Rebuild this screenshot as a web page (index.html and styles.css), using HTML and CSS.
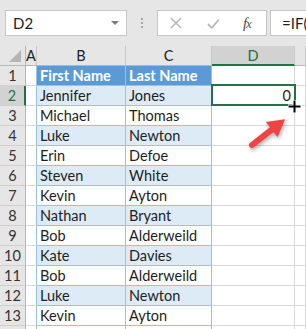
FILE: index.html
```html
<!DOCTYPE html>
<html lang="en">
<head>
    <meta charset="UTF-8">
    <title>Sheet - D2</title>
    <link rel="stylesheet" href="styles.css">
</head>
<body>
    <div class="formula-bar">
        <div class="name-box">
            <span>D2</span>
            <span class="drop"></span>
        </div>
        <div class="grip"><i></i><i></i><i></i></div>
        <div class="fx-buttons">
            <svg class="icon-x" width="12" height="12" viewBox="0 0 12 12"><path d="M1 1L11 11M11 1L1 11" stroke="#b9b9b9" stroke-width="1.6" fill="none"/></svg>
            <svg class="icon-ok" width="13" height="11" viewBox="0 0 13 11"><path d="M1 6L4.8 9.8L12 1.5" stroke="#b9b9b9" stroke-width="1.8" fill="none"/></svg>
            <span class="fx"><i>f</i><i class="sub">x</i></span>
        </div>
        <div class="formula-input">=IF(<span class="ref">C2</span></div>
    </div>

    <div class="sheet" id="sheet">
        <div class="row head-row">
            <div class="cell rh corner"><span class="tri"></span></div>
            <div class="cell ca">A</div>
            <div class="cell cb">B</div>
            <div class="cell cc">C</div>
            <div class="cell cd active-col">D</div>
            <div class="cell ce"></div>
        </div>
    </div>

    <div class="selection"></div>
    <svg class="cursor" width="15" height="15" viewBox="0 0 15 15">
        <path d="M7.5 1V14M1 7.5H14" stroke="#fff" stroke-width="4"/>
        <path d="M7.5 1.5V13.5M1.5 7.5H13.5" stroke="#000" stroke-width="2"/>
    </svg>
    <svg class="arrow" width="52" height="44" viewBox="0 0 52 44">
        <g transform="translate(6 37) rotate(-38)">
            <path d="M0 -3H25V-9.5L42 0L25 9.5V3H0A3 3 0 0 1 0 -3Z" fill="#ee4444"/>
        </g>
    </svg>

    <script>
        const people = [
            ['First Name', 'Last Name'],
            ['Jennifer', 'Jones'],
            ['Michael', 'Thomas'],
            ['Luke', 'Newton'],
            ['Erin', 'Defoe'],
            ['Steven', 'White'],
            ['Kevin', 'Ayton'],
            ['Nathan', 'Bryant'],
            ['Bob', 'Alderweild'],
            ['Kate', 'Davies'],
            ['Bob', 'Alderweild'],
            ['Luke', 'Newton'],
            ['Kevin', 'Ayton']
        ];

        const sheet = document.getElementById('sheet');
        people.forEach((p, i) => {
            const n = i + 1;
            const row = document.createElement('div');
            let cls = 'row in-table';
            if (n === 1) cls += ' tbl-head';
            else if (n % 2 === 0) cls += ' band';
            row.className = cls;
            row.innerHTML =
                `<div class="cell rh${n === 2 ? ' active-row' : ''}">${n}</div>` +
                `<div class="cell ca"></div>` +
                `<div class="cell cb t">${p[0]}</div>` +
                `<div class="cell cc t">${p[1]}</div>` +
                `<div class="cell cd num">${n === 2 ? '0' : ''}</div>` +
                `<div class="cell ce"></div>`;
            sheet.appendChild(row);
        });

        // partial row 14 peeking in at the bottom edge
        const tail = document.createElement('div');
        tail.className = 'row stub';
        tail.innerHTML = '<div class="cell rh"></div><div class="cell ca"></div><div class="cell cb"></div>' +
            '<div class="cell cc"></div><div class="cell cd"></div><div class="cell ce"></div>';
        sheet.appendChild(tail);
    </script>
</body>
</html>
```

FILE: styles.css
```css
* { box-sizing: border-box; margin: 0; padding: 0; }
body {
    width: 306px;
    height: 329px;
    overflow: hidden;
    position: relative;
    background: #fff;
    font-family: Lato, "Open Sans", sans-serif;
    color: #1e1e1e;
}

/* formula bar */
.formula-bar {
    height: 46px;
    background: #e6e6e6;
    display: flex;
    align-items: flex-start;
    padding-top: 10px;
}
.name-box {
    margin-left: 5px;
    width: 122px;
    height: 26px;
    background: #fff;
    border: 1px solid #c6c6c6;
    display: flex;
    align-items: center;
    justify-content: space-between;
    padding: 0 7px 0 7px;
    font-size: 15px;
}
.drop {
    width: 0;
    height: 0;
    border-left: 4px solid transparent;
    border-right: 4px solid transparent;
    border-top: 4px solid #7a7a7a;
}
.grip {
    margin-left: 14px;
    margin-top: 8px;
    display: flex;
    flex-direction: column;
    gap: 2px;
}
.grip i {
    width: 2px;
    height: 2px;
    background: #a6a6a6;
}
.fx-buttons {
    margin-left: 14px;
    width: 110px;
    height: 26px;
    background: #fff;
    border: 1px solid #c6c6c6;
    display: flex;
    align-items: center;
    padding-left: 12px;
}
.icon-ok { margin-left: 25px; }
.fx {
    margin-left: 23px;
    font-family: "Liberation Serif", serif;
    font-size: 15px;
    color: #4a4a4a;
    letter-spacing: -1px;
}
.fx .sub { font-size: 12px; }
.formula-input {
    margin-left: 3px;
    flex: 1;
    height: 26px;
    background: #fff;
    border: 1px solid #c6c6c6;
    border-right: none;
    padding-left: 11px;
    font-size: 15px;
    line-height: 24px;
    white-space: nowrap;
    overflow: hidden;
}
.ref { color: #e07a1f; }

/* grid */
.row {
    display: flex;
    height: 20px;
}
.cell {
    height: 20px;
    border-right: 1px solid #d9d9d9;
    border-bottom: 1px solid #d9d9d9;
    font-size: 14.5px;
    line-height: 20px;
    white-space: nowrap;
    overflow: hidden;
}
.rh { width: 26px; background: #e6e6e6; border-right-color: #b6b6b6; border-bottom-color: #cfcfcf; text-align: center; color: #333; }
.ca { width: 11px; }
.cb { width: 89px; }
.cc { width: 86px; }
.cd { width: 83px; }
.ce { flex: 1; }
.t { padding-left: 3px; }
.num { text-align: right; padding-right: 3px; }

.head-row .cell {
    background: #e6e6e6;
    border-right-color: #c8c8c8;
    border-bottom-color: #b6b6b6;
    text-align: center;
    color: #222;
}
.head-row .corner { position: relative; border-right-color: #b6b6b6; }
.tri {
    position: absolute;
    right: 4px;
    bottom: 3px;
    width: 0;
    height: 0;
    border-left: 12px solid transparent;
    border-bottom: 12px solid #b5b5b5;
}
.head-row .active-col {
    background: #d2d2d2;
    color: #217346;
    border-bottom: 2px solid #217346;
}
.active-row {
    background: #d2d2d2;
    color: #217346;
    border-right: 2px solid #217346;
}
.stub .ca { border-right-color: #9bc2e6; }
.stub .cb,
.stub .cc { border-right-color: #9bc2e6; }

/* table */
.in-table .ca { border-right-color: #9bc2e6; }
.in-table .cb,
.in-table .cc { border-right-color: #9bc2e6; border-bottom-color: #9bc2e6; }
.band .cb,
.band .cc { background: #ddebf7; }
.tbl-head .cb,
.tbl-head .cc { background: #5b9bd5; color: #fff; font-weight: 700; }

/* overlays */
.selection {
    position: absolute;
    left: 211px;
    top: 84px;
    width: 85px;
    height: 22px;
    border: 2px solid #217346;
}
.cursor {
    position: absolute;
    left: 287px;
    top: 99px;
}
.arrow {
    position: absolute;
    left: 246px;
    top: 108px;
    filter: drop-shadow(1px 2px 2px rgba(0, 0, 0, 0.35));
}
```
